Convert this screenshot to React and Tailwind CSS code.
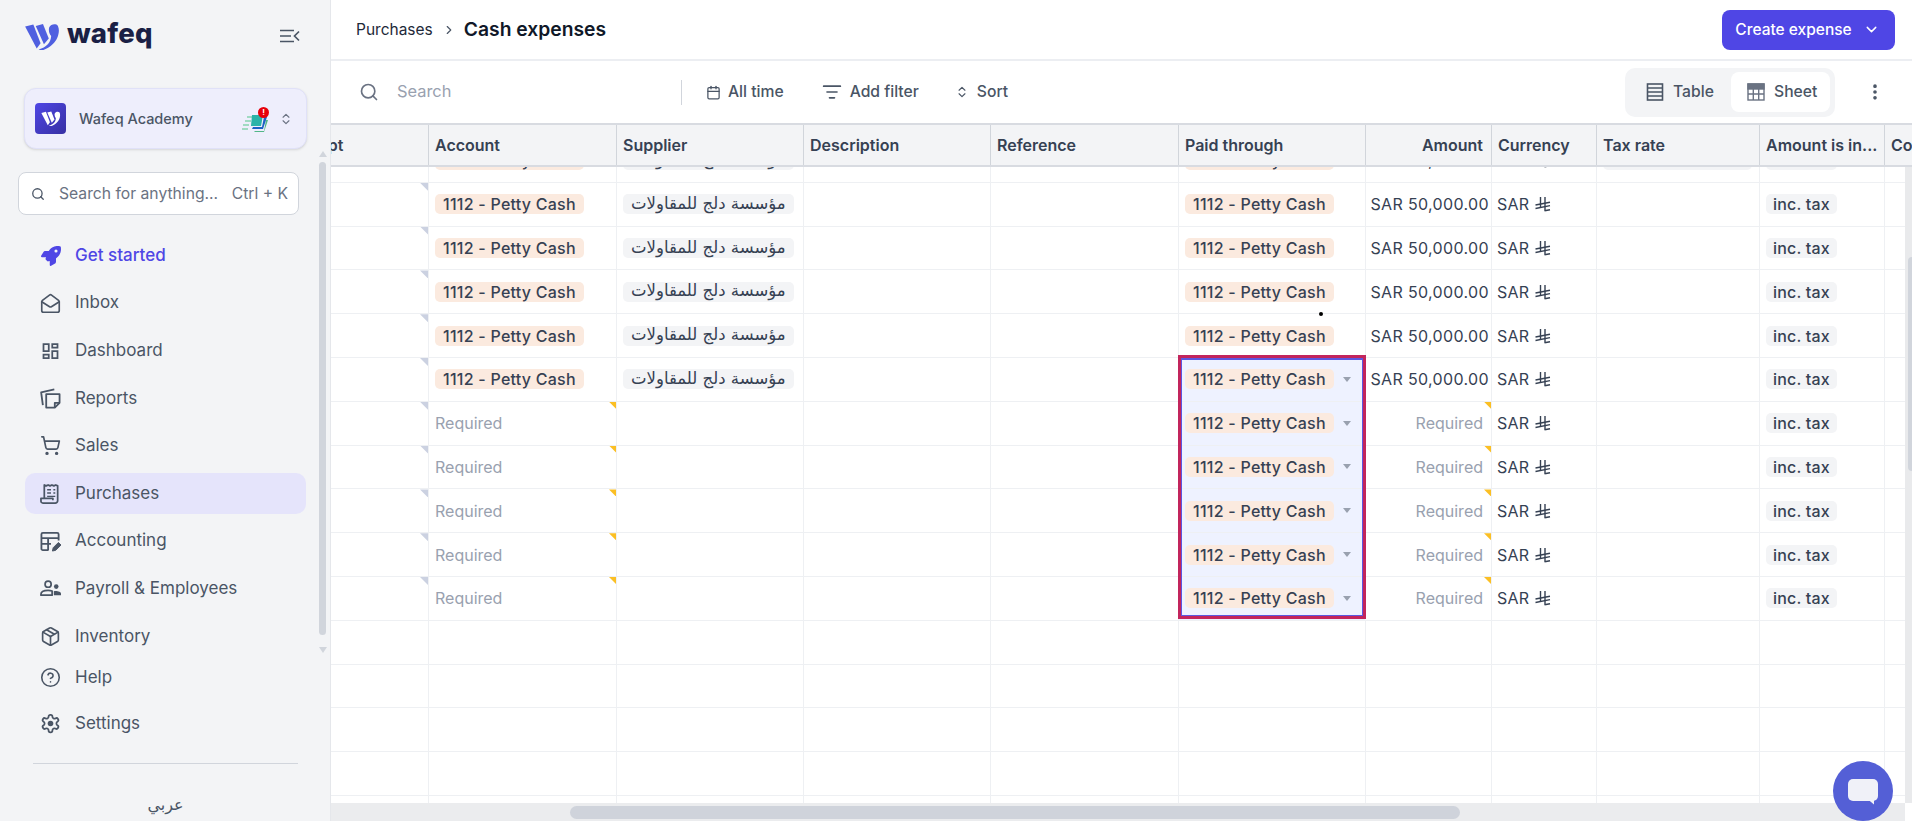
import React from 'react';
import {
  Calendar,
  ChevronDown,
  ChevronRight,
  ChevronsUpDown,
  CircleHelp,
  EllipsisVertical,
  ListFilter,
  MailOpen,
  Package,
  Search,
  ShoppingCart,
} from 'lucide-react';
import { FaRocket } from 'react-icons/fa6';
import { MdOutlineDashboard } from 'react-icons/md';

const COLS = [
  { name: 'Receipt', w: 'w-[150px]' },
  { name: 'Account', w: 'w-[188px]' },
  { name: 'Supplier', w: 'w-[187px]' },
  { name: 'Description', w: 'w-[187px]' },
  { name: 'Reference', w: 'w-[188px]' },
  { name: 'Paid through', w: 'w-[187px]' },
  { name: 'Amount', w: 'w-[126px]', right: true },
  { name: 'Currency', w: 'w-[105px]' },
  { name: 'Tax rate', w: 'w-[163px]' },
  { name: 'Amount is in...', w: 'w-[125px]' },
  { name: 'Cost center', w: 'w-[100px]' },
];

const ACCOUNT = '1112 - Petty Cash';
const SUPPLIER = 'مؤسسة دلج للمقاولات';

function LogoMark({ className, color }) {
  return (
    <svg viewBox="0 0 36 28" className={className} fill={color}>
      <path d="M0 3.5 8.5 1.5 16 21 12 26.5 Z" />
      <path d="M11 3 18.5 1 24.5 16 19.5 22 Z" />
      <path d="M14 27.5C22 25 26.5 21 27 13.5 25 11 24 8 25 4.5 26.5 1.5 31.5 0 34 3 36.5 8 34 17 29 21.5 25 25.5 20 28 17 28.5 Z" />
    </svg>
  );
}

function PanelToggle() {
  return (
    <svg viewBox="0 0 20 14" className="w-5 h-[14px] text-gray-600" fill="none" stroke="currentColor" strokeWidth="1.7">
      <path d="M0 1.5h14M0 7h11M0 12.5h14" />
      <path d="M19 2.5 14.5 7l4.5 4.5" />
    </svg>
  );
}

function CompanyBadge() {
  return (
    <div className="relative w-[26px] h-[22px]">
      <svg viewBox="0 0 26 18" className="w-[26px] h-[18px] mt-[6px]">
        <path d="M0 15h6M1 11h6M3 7h6M5 3h5" stroke="#86d3ae" strokeWidth="1.6" />
        <path d="M24 6h2l-4 12H12l1-1h9Z" fill="#52b788" />
        <path d="M22 3h3l-4 12H10l1-2h9Z" fill="#1d62c4" />
        <path d="M10 1h11l-2 11H9Z" fill="#2bb3a8" />
      </svg>
      <span className="absolute -top-[1px] -right-[1px] w-[11px] h-[11px] rounded-full bg-red-600 text-white text-[8px] leading-[11px] font-bold text-center">!</span>
    </div>
  );
}

function ReportsIcon() {
  return (
    <svg viewBox="0 0 22 22" className="w-[21px] h-[21px]" fill="none" stroke="currentColor" strokeWidth="1.9" strokeLinejoin="round">
      <path d="M6.5 6.5h14v9l-5 5h-9Z" />
      <path d="M15.5 20.5v-5h5" />
      <path d="M3 18 1.2 4.5 15 1.5" />
    </svg>
  );
}

function ReceiptIcon() {
  return (
    <svg viewBox="0 0 22 22" className="w-[21px] h-[21px]" fill="none" stroke="currentColor" strokeWidth="1.8" strokeLinejoin="round">
      <path d="M4.5 16V2l2 1 2-1 2 1 2-1 2 1 2-1 2 1v15.5a2.5 2.5 0 0 1-2.5 2.5H3a2 2 0 0 1-2-2V16h12.5v2" />
      <path d="M7.5 7h4M14 7h2M7.5 10.5h4M14 10.5h2M7.5 14h8.5" strokeWidth="1.5" />
    </svg>
  );
}

function AccountingIcon() {
  return (
    <svg viewBox="0 0 22 22" className="w-[21px] h-[21px]" fill="none" stroke="currentColor" strokeWidth="1.9">
      <path d="M9 20H3a1.5 1.5 0 0 1-1.5-1.5v-15A1.5 1.5 0 0 1 3 2h15a1.5 1.5 0 0 1 1.5 1.5V10" />
      <path d="M1.5 7.5h18M1.5 13.5h10M8.5 7.5V20" />
      <path d="M13 21l.8-3.5 5.5-5.5 2.7 2.7-5.5 5.5Z" fill="currentColor" strokeWidth="1" />
    </svg>
  );
}

function PayrollIcon() {
  return (
    <svg viewBox="0 0 22 22" className="w-[21px] h-[21px]" fill="none" stroke="currentColor" strokeWidth="1.8">
      <circle cx="8.5" cy="6.5" r="3.2" />
      <path d="M1 18v-1c0-2.8 3.5-4 7.5-4 1.6 0 3 .2 4.2.6V18Z" strokeLinejoin="round" />
      <circle cx="17" cy="9" r="2.4" fill="currentColor" stroke="none" />
      <path d="M14.5 18v-4.2c2.8-.6 7.5.2 7.5 2.7V18Z" fill="currentColor" stroke="none" />
    </svg>
  );
}

function SettingsIcon() {
  return (
    <svg viewBox="0 0 24 24" className="w-[21px] h-[21px]" fill="none" stroke="currentColor" strokeWidth="2" strokeLinejoin="round">
      <path d="M12.2 2h-.4a2 2 0 0 0-2 2v.2a2 2 0 0 1-1 1.7l-.4.3a2 2 0 0 1-2 0l-.2-.1a2 2 0 0 0-2.7.7l-.2.4a2 2 0 0 0 .7 2.7l.2.1a2 2 0 0 1 1 1.7v.6a2 2 0 0 1-1 1.7l-.2.1a2 2 0 0 0-.7 2.7l.2.4a2 2 0 0 0 2.7.7l.2-.1a2 2 0 0 1 2 0l.4.3a2 2 0 0 1 1 1.7v.2a2 2 0 0 0 2 2h.4a2 2 0 0 0 2-2v-.2a2 2 0 0 1 1-1.7l.4-.3a2 2 0 0 1 2 0l.2.1a2 2 0 0 0 2.7-.7l.2-.4a2 2 0 0 0-.7-2.7l-.2-.1a2 2 0 0 1-1-1.7v-.6a2 2 0 0 1 1-1.7l.2-.1a2 2 0 0 0 .7-2.7l-.2-.4a2 2 0 0 0-2.7-.7l-.2.1a2 2 0 0 1-2 0l-.4-.3a2 2 0 0 1-1-1.7V4a2 2 0 0 0-2-2Z" />
      <circle cx="12" cy="12" r="3.2" fill="currentColor" stroke="none" />
    </svg>
  );
}

function TableIcon() {
  return (
    <svg viewBox="0 0 18 18" className="w-[18px] h-[18px] text-gray-600" fill="none" stroke="currentColor" strokeWidth="1.6">
      <rect x="1.5" y="1" width="15" height="16" />
      <path d="M1.5 5h15M1.5 9h15M1.5 13h15" />
    </svg>
  );
}

function SheetIcon() {
  return (
    <svg viewBox="0 0 18 18" className="w-[18px] h-[18px] text-gray-500" fill="none" stroke="currentColor" strokeWidth="1.4">
      <rect x="1" y="1" width="16" height="16" />
      <rect x="1" y="1" width="16" height="5" fill="currentColor" />
      <path d="M1 11h16M6.3 6v11M11.7 6v11" />
    </svg>
  );
}

function RiyalSign() {
  return (
    <svg viewBox="0 0 16 16" className="w-[16px] h-[16px] ml-[6px] text-gray-700" fill="none" stroke="currentColor" strokeWidth="1.4">
      <path d="M5.5 1v10.5M10 1v13.5" />
      <path d="M0.5 9 15 6.2M0.5 12.5 15 9.6M9.5 14.8 15 13.7" />
    </svg>
  );
}

function NavItem({ icon, label, active, current }) {
  return (
    <div className={`flex items-center h-[41px] shrink-0 pl-[15px] rounded-[10px] text-[17px] ${active ? 'bg-[#e5e4fb]' : ''} ${current ? 'text-[#4f46e5] font-medium' : 'text-gray-600'}`}>
      <span className="w-[21px] h-[21px] flex items-center justify-center shrink-0 text-gray-600">{icon}</span>
      <span className="ml-[14px]">{label}</span>
    </div>
  );
}

function Sidebar() {
  return (
    <aside className="w-[331px] shrink-0 h-full flex bg-[#f3f4f6] border-r border-[#e5e7eb]">
      <div className="w-[319px] shrink-0 flex flex-col">
        <div className="flex items-center justify-between h-[74px] pl-[25px] pr-[19px] pb-[2px]">
          <div className="flex items-center">
            <LogoMark className="w-[35px] h-[27px]" color="#4f5fe0" />
            <span className="ml-[7px] text-[27.5px] leading-none font-extrabold text-[#1a1f45] tracking-[0.2px] pb-[4px]">wafeq</span>
          </div>
          <PanelToggle />
        </div>

        <div className="ml-[24px] w-[283px] h-[61px] mt-[14px] shrink-0 flex items-center pl-[10px] pr-[13px] rounded-xl bg-[#eeeefc] border border-[#e0e1f8] shadow-sm">
          <div className="w-[31px] h-[31px] rounded-[4px] bg-gradient-to-br from-[#4f46e5] to-[#3730a3] flex items-center justify-center">
            <LogoMark className="w-[20px] h-[15px]" color="#ffffff" />
          </div>
          <span className="ml-[13px] text-[14.5px] font-medium text-gray-600">Wafeq Academy</span>
          <div className="ml-auto flex items-center gap-[11px]">
            <CompanyBadge />
            <ChevronsUpDown size={14} className="text-gray-500" />
          </div>
        </div>

        <div className="ml-[18px] w-[281px] h-[43px] mt-[23px] shrink-0 flex items-center pl-[12px] pr-[10px] rounded-lg bg-white border border-gray-300 text-[15.7px] text-gray-500">
          <Search size={14} strokeWidth={2.2} className="text-gray-600" />
          <span className="ml-[14px]">Search for anything...</span>
          <span className="ml-auto">Ctrl + K</span>
        </div>

        <nav className="ml-[25px] w-[281px] mt-[20px] flex flex-col gap-[6.6px]">
          <NavItem current icon={<FaRocket size={20} className="text-[#4f46e5]" />} label="Get started" />
          <NavItem icon={<MailOpen size={21} strokeWidth={1.9} />} label="Inbox" />
          <NavItem icon={<MdOutlineDashboard size={22} />} label="Dashboard" />
          <NavItem icon={<ReportsIcon />} label="Reports" />
          <NavItem icon={<ShoppingCart size={21} strokeWidth={1.9} />} label="Sales" />
          <NavItem active icon={<ReceiptIcon />} label="Purchases" />
          <NavItem icon={<AccountingIcon />} label="Accounting" />
          <NavItem icon={<PayrollIcon />} label="Payroll & Employees" />
          <NavItem icon={<Package size={21} strokeWidth={1.9} />} label="Inventory" />
        </nav>
        <div className="ml-[25px] w-[281px] flex flex-col gap-[5px]">
          <NavItem icon={<CircleHelp size={21} strokeWidth={1.8} />} label="Help" />
          <NavItem icon={<SettingsIcon />} label="Settings" />
        </div>

        <div className="ml-[33px] w-[265px] h-px bg-gray-300 mt-[19px] shrink-0" />
        <div className="ml-[25px] w-[281px] mt-[29px] text-center text-[16px] text-gray-600 font-['DejaVu_Sans',sans-serif]">عربي</div>
      </div>

      <div className="w-[7px] shrink-0 mt-[151px] flex flex-col items-center">
        <div className="w-0 h-0 border-x-[4px] border-x-transparent border-b-[6px] border-b-gray-300" />
        <div className="w-[7px] h-[473px] mt-[5px] rounded-full bg-gray-300" />
        <div className="w-0 h-0 mt-[12px] border-x-[4px] border-x-transparent border-t-[6px] border-t-gray-300" />
      </div>
    </aside>
  );
}

function TopBar() {
  return (
    <header className="h-[61px] shrink-0 flex items-center justify-between pl-[25px] pr-[17px] border-b-2 border-[#eceef2]">
      <div className="flex items-center">
        <span className="text-[15.5px] text-gray-800">Purchases</span>
        <ChevronRight size={14} className="ml-[9px] mr-[8px] text-gray-600" />
        <span className="text-[19.3px] font-semibold text-gray-900">Cash expenses</span>
      </div>
      <button className="w-[173px] h-[40px] flex items-center justify-center gap-[11px] pr-[2px] rounded-lg bg-[#4f46e5] text-white text-[15.5px] font-medium">
        Create expense
        <ChevronDown size={17} />
      </button>
    </header>
  );
}

function Toolbar() {
  return (
    <div className="h-[62px] shrink-0 flex items-center pl-[28px] pr-[27px] text-[15.7px] font-medium text-gray-600">
      <Search size={20} className="text-gray-500" />
      <span className="ml-[18px] w-[284px] text-[16.4px] font-normal text-gray-400 pb-[2px]">Search</span>
      <div className="w-px h-[25px] bg-gray-300" />
      <Calendar size={15} className="ml-[24px]" />
      <span className="ml-[7px]">All time</span>
      <ListFilter size={20} className="ml-[38px]" />
      <span className="ml-[8px]">Add filter</span>
      <ChevronsUpDown size={14} className="ml-[36px]" />
      <span className="ml-[8px]">Sort</span>

      <div className="ml-auto flex items-center w-[210px] h-[49px] pl-[21px] pr-[5px] rounded-[10px] bg-[#f3f4f6]">
        <TableIcon />
        <span className="ml-[9px]">Table</span>
        <div className="ml-auto w-[99px] h-[40px] pl-[16px] flex items-center rounded-lg bg-white">
          <SheetIcon />
          <span className="ml-[9px]">Sheet</span>
        </div>
      </div>
      <EllipsisVertical size={20} strokeWidth={2.4} className="ml-[30px]" />
    </div>
  );
}

function Corner({ yellow }) {
  return (
    <span className={`absolute top-0 right-0 [clip-path:polygon(0_0,100%_0,100%_100%)] ${yellow ? 'w-[7px] h-[7px] bg-[#fbbf24]' : 'w-[8px] h-[8px] bg-[#cbd1e1]'}`} />
  );
}

function Pill({ children, tone = 'gray', className = '' }) {
  return (
    <span className={`inline-flex items-center h-[20px] rounded-[5px] font-medium text-gray-700 whitespace-nowrap ${tone === 'orange' ? 'bg-[#fbeadf]' : 'bg-[#f3f4f6]'} ${className}`}>
      {children}
    </span>
  );
}

function Cell({ col, selected, className = '', children }) {
  const border = selected ? 'bg-[#eef2ff] border-white' : 'border-[#eef0f3]';
  return (
    <div className={`${col.w} shrink-0 relative flex items-center h-full border-r ${border} ${className}`}>
      {children}
    </div>
  );
}

function Row({ kind, selected, partial }) {
  const filled = kind === 'filled';
  const required = kind === 'required';
  const hasPaid = selected || filled;
  return (
    <div className="flex h-[43.8px] shrink-0 border-b border-[#eef0f3]">
      <Cell col={COLS[0]}>{kind !== 'empty' && <Corner />}</Cell>
      <Cell col={COLS[1]} className="pl-[6px]">
        {filled && <Pill tone="orange" className="px-[8px] text-[16px] tracking-[0.25px]">{ACCOUNT}</Pill>}
        {required && <span className="text-[16px] text-gray-400">Required</span>}
        {required && <Corner yellow />}
      </Cell>
      <Cell col={COLS[2]} className="pl-[6px]">
        {filled && <Pill className="px-[8px] text-[16.5px] font-['DejaVu_Sans',sans-serif]">{SUPPLIER}</Pill>}
      </Cell>
      <Cell col={COLS[3]} />
      <Cell col={COLS[4]} />
      <Cell col={COLS[5]} selected={selected} className="pl-[6px]">
        {hasPaid && <Pill tone="orange" className="px-[8px] text-[16px] tracking-[0.25px]">{ACCOUNT}</Pill>}
        {selected && <span className="ml-[9px] w-0 h-0 border-x-[4.5px] border-x-transparent border-t-[5px] border-t-gray-400" />}
      </Cell>
      <Cell col={COLS[6]} className="justify-end">
        {filled && <span className="text-[16px] text-gray-700 tracking-[0.35px] whitespace-nowrap pr-[2px]">SAR 50,000.00</span>}
        {required && <span className="text-[16px] text-gray-400 pr-[8px]">Required</span>}
        {required && <Corner yellow />}
      </Cell>
      <Cell col={COLS[7]} className="pl-[5px]">
        {kind !== 'empty' && (
          <span className="flex items-center text-[16px] text-gray-700 tracking-[0.2px]">
            SAR
            <RiyalSign />
          </span>
        )}
      </Cell>
      <Cell col={COLS[8]} className="pl-[6px]">
        {partial && <Pill className="w-[149px] px-[8px]">&nbsp;</Pill>}
      </Cell>
      <Cell col={COLS[9]} className="pl-[6px]">
        {kind !== 'empty' && <Pill className="px-[7px] text-[16px] tracking-[0.2px]">inc. tax</Pill>}
      </Cell>
      <Cell col={COLS[10]} />
    </div>
  );
}

function Sheet() {
  const rows = [
    { kind: 'filled', partial: true },
    { kind: 'filled' },
    { kind: 'filled' },
    { kind: 'filled' },
    { kind: 'filled' },
    { kind: 'filled', selected: true },
    { kind: 'required', selected: true },
    { kind: 'required', selected: true },
    { kind: 'required', selected: true },
    { kind: 'required', selected: true },
    { kind: 'required', selected: true },
    { kind: 'empty' },
    { kind: 'empty' },
    { kind: 'empty' },
    { kind: 'empty' },
    { kind: 'empty' },
  ];

  return (
    <div className="flex-1 min-h-0 flex flex-col relative overflow-hidden">
      {/* column headers */}
      <div className="h-[44px] shrink-0 flex ml-[-52px] bg-[#f3f4f6] border-y-2 border-[#d8dbe1]">
        {COLS.map((col) => (
          <div
            key={col.name}
            className={`${col.w} shrink-0 flex items-center px-[6px] border-r border-[#d1d5db] text-[16px] font-semibold text-gray-700 whitespace-nowrap overflow-hidden ${col.right ? 'justify-end pr-[8px]' : ''}`}
          >
            {col.name}
          </div>
        ))}
      </div>

      <div className="flex-1 min-h-0 flex">
        <div className="flex-1 min-w-0 overflow-hidden">
          <div className="ml-[-52px] mt-[-28px] flex flex-col">
            {rows.map((row, i) => (
              <Row key={i} {...row} />
            ))}
          </div>
        </div>
        <div className="w-[7px] shrink-0 bg-[#e9eaec] flex justify-end">
          <div className="w-[4px] h-[214px] mt-[90px] rounded-l bg-gray-300" />
        </div>
      </div>

      <div className="h-[18px] shrink-0 mr-[7px] bg-[#ebecee] pt-[3px] pl-[239px]">
        <div className="w-[890px] h-[13px] rounded-full bg-[#cfd3db]" />
      </div>

      {/* selected range outline */}
      <div className="absolute left-[847px] top-[232px] w-[188px] h-[264px] border-[3px] border-[#c2255c] pointer-events-none">
        <div className="w-full h-full border border-t-2 border-[#5b57e0]" />
      </div>
      {/* stray cursor dot */}
      <span className="absolute left-[988px] top-[189px] w-[4px] h-[4px] rounded-full bg-black" />
    </div>
  );
}

export default function App() {
  return (
    <div className="w-screen h-screen flex overflow-hidden bg-white font-['Inter',sans-serif] relative">
      <Sidebar />
      <main className="flex-1 min-w-0 h-full flex flex-col">
        <TopBar />
        <Toolbar />
        <Sheet />
      </main>
      {/* chat launcher */}
      <div className="absolute right-[19px] bottom-0 w-[60px] h-[60px] rounded-full bg-[#545fd6] flex items-center justify-center">
        <div className="relative w-[30px] h-[22px] rounded-[5px] bg-[#f0f1f8] mb-[3px]">
          <span className="absolute right-[4px] -bottom-[4px] w-[6px] h-[5px] bg-[#f0f1f8] [clip-path:polygon(0_0,100%_0,100%_100%)]" />
        </div>
      </div>
    </div>
  );
}
